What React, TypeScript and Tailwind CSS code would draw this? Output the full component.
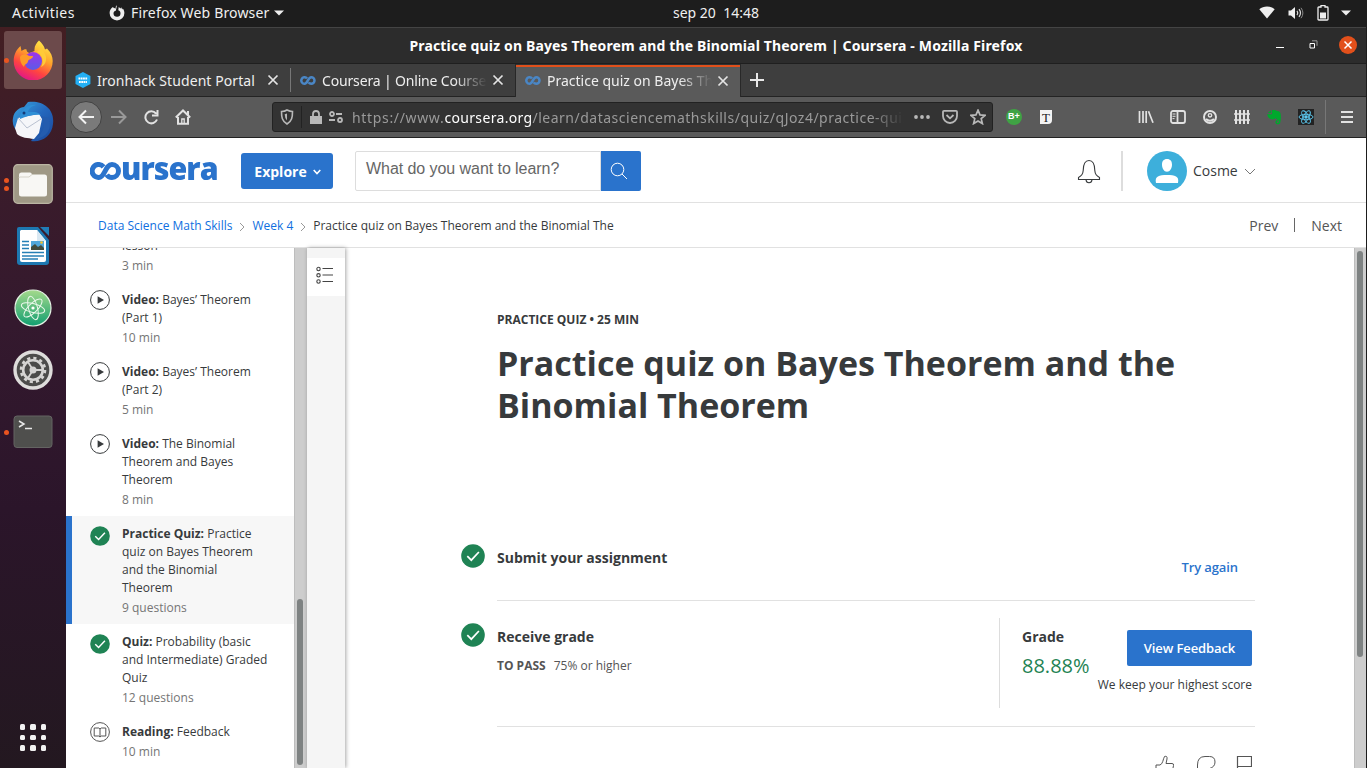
import type { ReactNode } from "react";

function InfinityMark({ className }: { className: string }) {
  return (
    <svg viewBox="0 0 31 18" className={className} fill="none" stroke="currentColor" strokeWidth="5">
      <path d="M13.600 4.800A6.500 6.500 0 1 0 8.900 15.500C14.800 15.500 15.300 2.500 22 2.500a6.500 6.500 0 0 1 0 13c-2.400 0-4.100-1-5.200-2.800" />
    </svg>
  );
}

function CheckBadge({ className }: { className: string }) {
  return (
    <svg viewBox="0 0 24 24" className={className}>
      <circle cx="12" cy="12" r="11.8" fill="#1f8354" />
      <path d="M6.3 12.2l4 4 7.6-8.2" fill="none" stroke="#fff" strokeWidth="1.7" />
    </svg>
  );
}

function PlayIcon() {
  return (
    <svg viewBox="0 0 20 20" className="size-5">
      <circle cx="10" cy="10" r="9.4" fill="#fff" stroke="#373a3c" strokeWidth="1" />
      <path d="M7.600 6.200L14 10l-6.400 3.800z" fill="#373a3c" />
    </svg>
  );
}

function BookIcon() {
  return (
    <svg viewBox="0 0 20 20" className="size-5" fill="none" stroke="#555" strokeWidth="1">
      <circle cx="10" cy="10" r="9.4" />
      <path d="M4.200 6h4.600L10 7l1.200-1h4.600v8h-4.600L10 15l-1.200-1H4.200zM10 7v8" />
    </svg>
  );
}

function Close() {
  return (
    <svg viewBox="0 0 12 12" className="size-3 shrink-0" stroke="#e4e4e4" strokeWidth="1.7">
      <path d="M1.500 1.500l9 9M10.500 1.500l-9 9" />
    </svg>
  );
}

function TopBar() {
  return (
    <div className="grid h-[27px] shrink-0 grid-cols-[673px_auto_1fr] items-center bg-[#1d1d1d] pb-0.5 font-['Noto_Sans',sans-serif] text-[14px] text-[#f0f0f0]">
      <div className="flex items-center pl-3">
        <span className="w-[97px] whitespace-nowrap tracking-[0.45px]">Activities</span>
        <svg viewBox="0 0 16 16" className="mr-1.5 size-4">
          <path d="M8 .3c-1.400 1-1.500 2.200-1.200 3.200-1.300 0-2.300-.3-2.800-1.400C2 3.200.6 5.400.6 8.100a7.400 7.400 0 1 0 14.800 0c0-2-.7-3.700-1.700-4.700l-.5 1-1-2.200-.7 1.200L9.700 2 9.300 5.300C11 6 11.600 7 11.500 8.500A3.400 3.400 0 0 1 8 11.700a3.500 3.500 0 0 1-3.500-3.300c0-1.400.8-2.400 2.300-2.700z" fill="#eee" />
        </svg>
        <span className="whitespace-nowrap tracking-[0.16px]">Firefox Web Browser</span>
        <svg viewBox="0 0 10 6" className="ml-[5px] h-1.5 w-2.5"><path d="M0 .5h10L5 5.500z" fill="#eee" /></svg>
      </div>
      <span className="whitespace-pre">sep 20  14:48</span>
      <div className="flex items-center justify-end pr-4">
        <svg viewBox="0 0 16 14" className="mr-[13px] h-3.5 w-4"><path d="M.3 3.200C4.500-.5 11.500-.5 15.700 3.200L8 12.500z" fill="#eee" /></svg>
        <svg viewBox="0 0 16 14" className="mr-[13px] h-3.5 w-4" fill="none" stroke="#ddd">
          <path d="M.5 4.500H3L7 1v12L3 9.500H.5z" fill="#eee" stroke="none" />
          <path d="M9 4.800q1.600 2.200 0 4.400M11 3.200q3 3.800 0 7.600" strokeWidth="1.200" /><path d="M13 1.800q3.800 5.200 0 10.400" stroke="#888" />
        </svg>
        <svg viewBox="0 0 12 16" className="mr-3 h-4 w-3"><path d="M4 .5h4V2h2.200q.8 0 .8.800v11.400q0 .8-.8.8H1.800q-.8 0-.8-.8V2.800Q1 2 1.800 2H4z" fill="none" stroke="#eee" strokeWidth="1.300" /><path d="M3 7.500h6v6H3z" fill="#eee" /></svg>
        <svg viewBox="0 0 10 6" className="h-1.5 w-2.5"><path d="M0 .5h10L5 5.500z" fill="#eee" /></svg>
      </div>
    </div>
  );
}

function DockItem({ children, dots = 0, active = false }: { children: ReactNode; dots?: number; active?: boolean }) {
  return (
    <div className="flex h-[62px] items-center">
      <div className="-mr-1 flex w-2 shrink-0 flex-col items-end gap-[3px]">
        {Array.from({ length: dots }, (_, i) => (
          <span key={i} className="z-10 size-[5px] translate-x-px rounded-full bg-[#e95420]" />
        ))}
      </div>
      <div className={`flex h-[58px] w-[58px] items-center justify-center rounded-[3px] ${active ? "bg-[#6c4a4b]" : ""}`}>{children}</div>
    </div>
  );
}

function Dock() {
  return (
    <nav className="flex w-[66px] shrink-0 flex-col bg-[linear-gradient(180deg,#431e22_0%,#3b1c2a_18%,#34192e_40%,#2b152a_65%,#231820_100%)] pt-0.5">
      <DockItem dots={1} active>
        <svg viewBox="0 0 40 40" className="-mt-px size-10">
          <defs>
            <linearGradient id="ff" x1=".8" y1="0" x2=".3" y2="1"><stop offset="0" stopColor="#fff04a" /><stop offset=".4" stopColor="#ffa42b" /><stop offset=".7" stopColor="#ff4540" /><stop offset="1" stopColor="#e0138c" /></linearGradient>
            <linearGradient id="ffp" x1="0" y1="0" x2="0" y2="1"><stop offset="0" stopColor="#a033e8" /><stop offset="1" stopColor="#5a5ce8" /></linearGradient>
          </defs>
          <path d="M26 .5c3 3 5 5 6 9l2-1c4 4 5.700 8 5.700 12.500A19.500 19.500 0 0 1 .7 21C.7 15 3 10.500 6 7.500l1.500-1.500 1 5c2-1.500 4-2 5-1.500 0 2 1 3 3 3.500l5-2c-.5-5 2-8 4.500-10.500z" fill="url(#ff)" />
          <circle cx="20" cy="21" r="9" fill="url(#ffp)" />
          <path d="M7 17c2-3 6-3 9-1h4c0 3-4 3-5 5 0 3-4 3-4 6-3-3-4-6-4-10z" fill="#ff9a28" />
          <path d="M24 12c6 3 7 10 4 15 5-2 7-9 3-15l-3-4z" fill="#ffcb38" />
        </svg>
      </DockItem>
      <DockItem>
        <svg viewBox="0 0 42 42" className="size-[42px]">
          <defs><linearGradient id="tb" x1="0" y1="0" x2="1" y2="1"><stop offset="0" stopColor="#39a5df" /><stop offset=".5" stopColor="#2467bd" /><stop offset="1" stopColor="#19479a" /></linearGradient></defs>
          <path d="M16 1c15-2 27 7 25 22-1 12-12 19-22 17l3-4C8 36-1 28 1 17 2 10 8 6 12 6z" fill="url(#tb)" />
          <path d="M6 17l21-4 3 5-3 14-5 6c-6-1-13-1-17-5l-2-6z" fill="#f5f6f9" />
          <path d="M6 17l9 10 14-9" fill="none" stroke="#b9c1d0" />
          <path d="M8 15C10 8 17 3 24 4c-4 1-7 3-8 7 5 0 9-1 13 3-6-1-13 0-21 4z" fill="#2f8fd6" />
          <circle cx="12" cy="12" r="1.500" fill="#153b78" />
          <path d="M29 15c5 8 3 16-5 23 11-2 16-10 13-21z" fill="#245cae" />
        </svg>
      </DockItem>
      <DockItem dots={2}>
        <svg viewBox="0 0 40 40" className="size-10">
          <rect x=".7" y=".7" width="38.600" height="38.600" rx="4" fill="#9f9885" stroke="#bbb5a3" strokeWidth="1.200" />
          <path d="M6 11q0-2.500 2.500-2.500H17q1.500 0 2 2h12.500Q34 10.500 34 13v17q0 2.500-2.500 2.500h-23Q6 32.500 6 30z" fill="#f8f7f4" />
          <path d="M6 14q0-1 1-1h9l3-2.500" stroke="#d6d3c9" fill="none" />
        </svg>
      </DockItem>
      <DockItem>
        <svg viewBox="0 0 34 40" className="h-10 w-[34px]">
          <path d="M3 1h19l11 13v22q0 3-3 3H4q-3 0-3-3V3q0-2 2-2z" fill="#1d78b1" />
          <path d="M5 4h16l9 11v19q0 2-2 2H6q-2 0-2-2V5z" fill="#fff" />
          <path d="M24 1h9v9z" fill="#207db7" /><path d="M21 4v11h9z" fill="#d9e8f2" />
          <path d="M6 15.500h7M6 19h7M6 22.500h7M6 26.500h22M6 30h22M6 33h16" stroke="#267fb5" strokeWidth="1.700" />
          <path d="M15 15h13v9H15z" fill="#51a7da" /><path d="M15 24v-3l4-3 3 3 3-2 3 3v2z" fill="#424b3d" /><circle cx="25.500" cy="16.500" r="1.300" fill="#f5c32c" />
        </svg>
      </DockItem>
      <DockItem>
        <svg viewBox="0 0 38 38" className="size-[38px]">
          <defs><linearGradient id="at" x1="0" y1="0" x2="0" y2="1"><stop offset="0" stopColor="#a5da8c" /><stop offset="1" stopColor="#119e70" /></linearGradient></defs>
          <circle cx="19" cy="19" r="18" fill="url(#at)" stroke="#e4f2e4" strokeWidth="1.200" />
          <g fill="none" stroke="#e9f7ea" strokeWidth="1">
            <ellipse cx="19" cy="19" rx="12" ry="4.500" transform="rotate(15 19 19)" />
            <ellipse cx="19" cy="19" rx="12" ry="4.500" transform="rotate(75 19 19)" />
            <ellipse cx="19" cy="19" rx="12" ry="4.500" transform="rotate(135 19 19)" />
          </g>
          <circle cx="19" cy="19" r="1.600" fill="#fff" />
        </svg>
      </DockItem>
      <DockItem>
        <svg viewBox="0 0 40 40" className="size-10" fill="none">
          <circle cx="20" cy="20" r="18" fill="#4c4c4a" stroke="#dedddb" strokeWidth="3.400" />
          <circle cx="20" cy="20" r="12" stroke="#d5d4d2" strokeWidth="2.600" strokeDasharray="3.140 3.140" />
          <circle cx="20" cy="20" r="9.800" stroke="#d5d4d2" strokeWidth="2.600" />
          <circle cx="20" cy="20" r="3.500" fill="#d5d4d2" />
          <path d="M20 20h9M20 20l-5-8M20 20l-5 8" stroke="#d5d4d2" strokeWidth="1.800" />
        </svg>
      </DockItem>
      <DockItem dots={1}>
        <svg viewBox="0 0 40 34" className="h-[34px] w-10">
          <rect x="1" y="1" width="38" height="31.500" rx="3" fill="#4f4f4d" stroke="#646462" />
          <path d="M6 6l5 3-5 3M12 13.500h7" stroke="#e8e8e8" strokeWidth="1.500" fill="none" />
        </svg>
      </DockItem>
      <div className="mx-auto mt-auto mb-[17px] grid grid-cols-3 gap-[5px]">
        {Array.from({ length: 9 }, (_, i) => (
          <span key={i} className="size-[5.600px] rounded-[1.500px] bg-[#f2f2f2]" />
        ))}
      </div>
    </nav>
  );
}

function TitleBar() {
  return (
    <div className="grid h-[37px] shrink-0 grid-cols-[1fr_auto_1fr] items-center border-t border-b border-t-[#444] border-b-[#1f1f1f] bg-[#2c2c2c]">
      <span />
      <span className="whitespace-nowrap font-['Noto_Sans',sans-serif] text-[14px] font-bold tracking-[0.15px] text-white">Practice quiz on Bayes Theorem and the Binomial Theorem | Coursera - Mozilla Firefox</span>
      <div className="flex items-center justify-end pr-[9px] pb-0.5">
        <svg viewBox="0 0 8 8" className="mr-[25px] size-2"><path d="M0 6.500h8" stroke="#fff" /></svg>
        <svg viewBox="0 0 9 9" className="mr-[21px] size-[9px]" fill="none"><path d="M1 3.500h4.500V8H1z" stroke="#fff" /><path d="M3 .8h5v5" stroke="#999" /></svg>
        <svg viewBox="0 0 18 18" className="size-[18px]"><circle cx="9" cy="9" r="9" fill="#e2501b" /><path d="M5.500 5.500l7 7M12.500 5.500l-7 7" stroke="#fff" strokeWidth="1.500" /></svg>
      </div>
    </div>
  );
}

function TabStrip() {
  const text = "w-[165px] overflow-hidden whitespace-nowrap mask-[linear-gradient(90deg,#000_80%,transparent_100%)]";
  return (
    <div className="flex h-[33px] shrink-0 border-b border-[#232323] bg-[#3e3e3e] font-['Noto_Sans',sans-serif] text-[14px] text-[#eee]">
      <div className="flex w-[225px] items-center pl-2">
        <svg viewBox="0 0 18 18" className="mr-1 size-[18px]"><path d="M9 1l7.500 4v8L9 17l-7.500-4V5z" fill="#23b0f5" /><path d="M4.500 7.500h9M5 11h8" stroke="#fff" strokeWidth="2.200" strokeDasharray="1.800 .5" /></svg>
        <span className="w-[172px] whitespace-nowrap pl-px tracking-[0.08px]">Ironhack Student Portal</span>
        <Close />
        <span className="ml-[11px] h-6 w-px bg-[#777]" />
      </div>
      <div className="flex w-[225px] items-center pl-[9px]">
        <InfinityMark className="mr-1.5 h-[9px] w-4 text-[#4a86c5]" />
        <span className={`${text} tracking-[-0.16px]`}>Coursera | Online Courses</span>
        <span className="ml-[5px]"><Close /></span>
      </div>
      <div className="-mb-px flex h-[33px] w-[224px] items-center bg-[#5a5a5a] pl-[9px] shadow-[inset_0_1px_0_#333,inset_0_3px_0_#e2501b,-1px_0_0_#282828,1px_0_0_#282828]">
        <InfinityMark className="mr-1.5 h-[9px] w-4 text-[#4a86c5]" />
        <span className={text}>Practice quiz on Bayes Theorem</span>
        <span className="ml-[5px]"><Close /></span>
      </div>
      <div className="flex items-center pl-[10px]">
        <svg viewBox="0 0 14 14" className="size-3.5" stroke="#e8e8e8" strokeWidth="2"><path d="M7 0v14M0 7h14" /></svg>
      </div>
    </div>
  );
}

function Tool({ children }: { children: ReactNode }) {
  return <span className="flex w-8 shrink-0 items-center justify-center">{children}</span>;
}

function NavBar() {
  return (
    <div className="flex h-[41px] shrink-0 items-center border-b border-[#222] bg-[#5a5a5a] pl-1 text-[#e2e2e2]">
      <span className="mr-px flex size-8 items-center justify-center rounded-full border border-[#424242] bg-[#7a7a7a]">
        <svg viewBox="0 0 16 16" className="size-4" fill="none" stroke="#f2f2f2" strokeWidth="2"><path d="M16 8H1.500M8 1.500L1.500 8 8 14.500" /></svg>
      </span>
      <Tool><svg viewBox="0 0 16 16" className="size-4" fill="none" stroke="#999" strokeWidth="2"><path d="M0 8h14.500M8 1.500L14.500 8 8 14.500" /></svg></Tool>
      <Tool><svg viewBox="0 0 16 16" className="size-4" fill="none" stroke="currentColor" strokeWidth="2"><path d="M13 4.500a6 6 0 1 0 1 6M9 6.500h5.500V1" /></svg></Tool>
      <Tool><svg viewBox="0 0 16 16" className="size-4" fill="none" stroke="currentColor" strokeWidth="2"><path d="M.8 8.500L8 1.500l7.200 7M3 8v6.800h10V8M13 6V2" /><path d="M6.800 14v-4h2.400v4" strokeWidth="1.300" /></svg></Tool>
      <div className="ml-[73px] flex h-[30px] w-[721px] items-center rounded-[3px] border border-[#222] bg-[#333] pl-[7px] text-[#b8b8b8]">
        <svg viewBox="0 0 14 16" className="h-4 w-3.5" fill="none" stroke="currentColor" strokeWidth="1.600"><path d="M7 1q3 1.500 5.500 1.500C12.500 8 12 12 7 15 2 12 1.500 8 1.500 2.500 4 2.500 5.500 2 7 1z" /><path d="M7 4.500v7Q4.800 9.500 4.700 5.300z" fill="currentColor" stroke="none" /></svg>
        <span className="mr-2 ml-[7px] h-[22px] w-px bg-[#222]" />
        <svg viewBox="0 0 12 14" className="mr-[7px] h-3.5 w-3"><path d="M0 6h12v8H0z" fill="currentColor" /><path d="M3 7V4q0-3 3-3t3 3v3" fill="none" stroke="currentColor" strokeWidth="1.800" /></svg>
        <svg viewBox="0 0 14 12" className="mr-[9px] h-3 w-3.5" fill="none" stroke="currentColor" strokeWidth="1.800"><circle cx="3" cy="3" r="2" /><path d="M7 3h6M0 9h6" /><circle cx="11" cy="9" r="2" /></svg>
        <div className="w-[552px] overflow-hidden whitespace-nowrap font-['Noto_Sans',sans-serif] text-[14px] tracking-[0.5px] text-[#9a9a9a] mask-[linear-gradient(90deg,#000_94%,transparent_100%)]">
          <span className="tracking-[0.66px]">https://www.</span><span className="tracking-[0.34px] text-white">coursera.org</span>/learn/datasciencemathskills/quiz/qJoz4/practice-quiz
        </div>
        <svg viewBox="0 0 16 4" className="ml-2.5 h-1 w-4" fill="currentColor"><circle cx="2" cy="2" r="1.900" /><circle cx="8" cy="2" r="1.900" /><circle cx="14" cy="2" r="1.900" /></svg>
        <svg viewBox="0 0 16 16" className="ml-3 size-4" fill="none" stroke="currentColor" strokeWidth="1.800"><path d="M2 1.800h12q1 0 1 1V7A7 7 0 0 1 1 7V2.800q0-1 1-1zM4.500 6L8 9.300 11.500 6" /></svg>
        <svg viewBox="0 0 16 16" className="ml-3 size-4" fill="none" stroke="currentColor" strokeWidth="1.700"><path d="M8 1.200l2 4.700 5.100.4-3.900 3.300 1.200 5L8 12l-4.400 2.600 1.200-5L.9 6.300 6 5.900z" /></svg>
      </div>
      <div className="ml-[5px] flex">
        <Tool><span className="flex size-4 items-center justify-center rounded-full bg-[#3fa344] font-['Liberation_Sans',sans-serif] text-[9px] font-bold text-white">B+</span></Tool>
        <Tool><span className="flex h-3.5 w-3 items-center justify-center rounded-br-[4px] bg-[#f3f3f3] font-['Liberation_Serif',serif] text-[13px] leading-none text-[#222]">T</span></Tool>
      </div>
      <div className="ml-[68px] flex">
        <Tool><svg viewBox="0 0 16 14" className="h-3.5 w-4" fill="none" stroke="currentColor" strokeWidth="1.700"><path d="M1.500 1v12M5 1v12M8.200 1v12M10.500 1.300L15 12.800" /></svg></Tool>
        <Tool><svg viewBox="0 0 16 14" className="h-3.5 w-4" fill="none" stroke="currentColor" strokeWidth="1.800"><rect x="1" y="1" width="14" height="12" rx="2" /><path d="M7.500 1v12" /><path d="M2.500 4h3M2.500 6.300h3M2.500 8.600h2" strokeWidth="1" /></svg></Tool>
        <Tool><svg viewBox="0 0 14 14" className="size-3.5" fill="none" stroke="currentColor" strokeWidth="2"><circle cx="7" cy="7" r="6" /><circle cx="7" cy="5.300" r="1.700" strokeWidth="1.400" /><path d="M3 9q4 3.500 8 0" /></svg></Tool>
        <Tool><svg viewBox="0 0 16 14" className="h-3.5 w-4" fill="none" stroke="currentColor"><path d="M2 0v14M6 0v14M10 0v14M14 0v14" strokeWidth="2" /><path d="M0 4h16M0 10h16" strokeWidth="1.400" /></svg></Tool>
        <Tool><svg viewBox="0 0 14 16" className="h-4 w-3.5"><path d="M4 1.200V4H.8L4 1.200zM4.800 1h3.500l1 .8c2.500 0 3.800 1 4.200 2.500.7 3.500.4 6.500-.3 9.500-.5 1.800-4 2.200-4.700 0-.5-2 .8-3 2.300-2.500v1.200c-1-.2-1.200.5-.8 1.200 1 .5 1.800 0 1.800-1.200 0-2-2.800-1.500-3.300-3.500C7.500 11.500.8 11 .2 5.300h4.600z" fill="#00a82d" /></svg></Tool>
        <Tool><svg viewBox="0 0 16 16" className="size-4" fill="none" stroke="#5cc9f0" strokeWidth=".9"><path d="M0 0h16v16H0z" fill="#222" stroke="none" /><ellipse cx="8" cy="8" rx="7" ry="2.700" /><ellipse cx="8" cy="8" rx="7" ry="2.700" transform="rotate(60 8 8)" /><ellipse cx="8" cy="8" rx="7" ry="2.700" transform="rotate(120 8 8)" /><circle cx="8" cy="8" r="1.300" fill="#5cc9f0" /></svg></Tool>
      </div>
      <span className="ml-[3px] h-[34px] w-px bg-[#777]" />
      <svg viewBox="0 0 12 12" className="ml-[15px] size-3" stroke="currentColor" strokeWidth="2"><path d="M0 1h12M0 6h12M0 11h12" /></svg>
    </div>
  );
}

function Header() {
  return (
    <header className="flex h-[65px] shrink-0 items-center border-b border-[#e1e1e1] pt-0.5 pl-6">
      <div className="flex w-[151px] items-center text-[#2a73cc]">
        <InfinityMark className="h-[18px] w-[31px] shrink-0" />
        <span className="-mt-[7px] origin-left scale-x-[0.95] font-['Open_Sans',sans-serif] text-[32px] leading-[33px] font-extrabold tracking-[-1px]">ursera</span>
      </div>
      <button className="flex h-9 w-[92px] shrink-0 items-center justify-center gap-1.5 rounded-[3px] bg-[#2a73cc] pl-px text-[14px] font-bold text-white">
        Explore
        <svg viewBox="0 0 8 6" className="mt-0.5 h-1.5 w-2" fill="none" stroke="#fff" strokeWidth="1.600"><path d="M.7 1L4 4.500 7.300 1" /></svg>
      </button>
      <div className="ml-[22px] flex h-10 w-[286px] shrink-0">
        <div className="w-[246px] rounded-l-[2px] border border-[#ddd] pt-2 pl-2.5 font-['Liberation_Sans',sans-serif] text-[16px] leading-[18px] tracking-[-0.06px] text-[#666]">What do you want to learn?</div>
        <div className="flex w-10 items-center justify-center rounded-r-[2px] bg-[#2a73cc]">
          <svg viewBox="0 0 18 18" className="size-[18px] -ml-1" fill="none" stroke="#fff" strokeWidth="1"><circle cx="7.500" cy="7.500" r="6.300" /><path d="M12 12l5 5" /></svg>
        </div>
      </div>
      <svg viewBox="0 0 24 26" className="mt-0.5 ml-[436px] h-[26px] w-6 shrink-0" fill="none" stroke="#373a3c" strokeWidth="1.100"><path d="M1.500 20.500v-2c3-1.500 4.500-4 4.700-7C6.300 5 7.500 1.500 12 1.500s5.700 3.500 5.800 10c.2 3 1.700 5.500 4.700 7v2zM9 20.800c.3 4 5.700 4 6 0" /></svg>
      <span className="ml-5 h-10 w-0.5 shrink-0 bg-[#ddd]" />
      <svg viewBox="0 0 40 40" className="ml-6 size-10 shrink-0"><circle cx="20" cy="20" r="20" fill="#3dafdb" /><path d="M20 8c3.400 0 5 2.200 5 5.600 0 4-2 7.200-5 7.200s-5-3.200-5-7.200C15 10.200 16.600 8 20 8zM9 32c-1.500-7 3-8 11-8s12.500 1 11 8z" fill="#fff" /></svg>
      <span className="-mt-px ml-1.5 w-[51px] text-[14px] text-[#373a3c]">Cosme</span>
      <svg viewBox="0 0 12 7" className="mt-px h-[7px] w-3" fill="none" stroke="#777"><path d="M1 1l5 5 5-5" /></svg>
    </header>
  );
}

function Crumb() {
  return <svg viewBox="0 0 6 10" className="mx-[7px] mt-0.5 h-2.5 w-1.5" fill="none" stroke="#999"><path d="M1 1l4 4-4 4" /></svg>;
}

function Breadcrumbs() {
  return (
    <div className="flex h-[45px] shrink-0 items-center border-b border-[#e1e1e1] pt-px pr-6 pl-8 text-[12px] whitespace-nowrap text-[#373a3c]">
      <span className="text-[#0f6fe0]">Data Science Math Skills</span>
      <Crumb />
      <span className="text-[#0f6fe0]">Week 4</span>
      <Crumb />
      <span>Practice quiz on Bayes Theorem and the Binomial The</span>
      <div className="-mt-px ml-auto flex items-center text-[14px] text-[#555]">
        Prev<span className="mx-4 h-3.5 w-px bg-[#666]" />Next
      </div>
    </div>
  );
}

type Lesson = { kind: string; lines: string[]; meta: string; icon: "play" | "check" | "book"; active?: boolean };

const lessons: Lesson[] = [
  { kind: "Video:", lines: ["Bayes’ Theorem", "(Part 1)"], meta: "10 min", icon: "play" },
  { kind: "Video:", lines: ["Bayes’ Theorem", "(Part 2)"], meta: "5 min", icon: "play" },
  { kind: "Video:", lines: ["The Binomial", "Theorem and Bayes", "Theorem"], meta: "8 min", icon: "play" },
  { kind: "Practice Quiz:", lines: ["Practice", "quiz on Bayes Theorem", "and the Binomial", "Theorem"], meta: "9 questions", icon: "check", active: true },
  { kind: "Quiz:", lines: ["Probability (basic", "and Intermediate) Graded", "Quiz"], meta: "12 questions", icon: "check" },
  { kind: "Reading:", lines: ["Feedback"], meta: "10 min", icon: "book" },
];

function Sidebar() {
  return (
    <aside className="flex w-[228px] shrink-0 flex-col overflow-hidden text-[12px] leading-[18px] text-[#373a3c]">
      <div className="flex h-[34px] shrink-0 flex-col justify-end overflow-hidden pb-[7px] pl-14">
        <div>lesson</div>
        <div className="mt-0.5 text-[#757575]">3 min</div>
      </div>
      {lessons.map((l, i) => (
        <div key={i} className={`flex shrink-0 border-l-[6px] pt-[9px] pb-[7px] pl-[18px] ${l.active ? "border-[#2a73cc] bg-[#f7f7f7]" : "border-transparent"}`}>
          <span className={`mr-3 shrink-0 ${l.icon === "check" ? "mt-px" : "-mt-px"}`}>
            {l.icon === "play" ? <PlayIcon /> : l.icon === "check" ? <CheckBadge className="size-5" /> : <BookIcon />}
          </span>
          <div className="whitespace-nowrap">
            {l.lines.map((line, j) => (
              <div key={j}>{j === 0 && <b>{l.kind} </b>}{line}</div>
            ))}
            <div className="mt-0.5 text-[#757575]">{l.meta}</div>
          </div>
        </div>
      ))}
    </aside>
  );
}

function Quiz() {
  return (
    <main className="flex min-w-0 flex-1 flex-col overflow-hidden pt-[63px] pl-[116px] text-[#373a3c]">
      <div className="flex h-[215px] shrink-0 flex-col pl-9">
        <div className="text-[12px] leading-[18px] font-bold">PRACTICE QUIZ • 25 MIN</div>
        <h1 className="mt-[13px] whitespace-nowrap text-[34px] leading-[42px] font-bold">Practice quiz on Bayes Theorem and the<br />Binomial Theorem</h1>
      </div>
      <section className="flex h-[75px] w-[794px] shrink-0">
        <CheckBadge className="mt-[18px] mr-3 size-6" />
        <div className="flex flex-1 justify-between border-b border-[#e1e1e1]">
          <h2 className="mt-[21px] text-[14px] leading-[22px] font-bold">Submit your assignment</h2>
          <span className="mt-[31px] mr-[17px] text-[13px] leading-5 font-semibold tracking-[-0.1px] text-[#2a73cc]">Try again</span>
        </div>
      </section>
      <section className="flex h-[126px] w-[794px] shrink-0">
        <CheckBadge className="mt-[22px] mr-3 size-6" />
        <div className="flex flex-1 border-b border-[#e1e1e1] pt-[17px] pb-[18px]">
          <div className="w-[502px]">
            <h2 className="mt-2 text-[14px] leading-[22px] font-bold">Receive grade</h2>
            <p className="mt-[9px] text-[12px] leading-[18px] text-[#555]"><b className="mr-2">TO PASS</b>75% or higher</p>
          </div>
          <div className="w-[98px] shrink-0 border-l border-[#ddd] pl-[22px]">
            <h2 className="mt-2 text-[14px] leading-[22px] font-bold">Grade</h2>
            <p className="mt-1.5 text-[20px] leading-6 text-[#1f8354]">88.88%</p>
          </div>
          <div className="flex w-[155px] shrink-0 flex-col items-end">
            <button className="mt-3 h-9 w-[125px] rounded-[2px] bg-[#2a73cc] pt-0.5 text-[13px] font-semibold tracking-[-0.1px] text-white">View Feedback</button>
            <p className="mt-2.5 text-[12px] leading-[18px] whitespace-nowrap">We keep your highest score</p>
          </div>
        </div>
      </section>
      <div className="flex w-[794px] shrink-0 justify-end pt-7 pr-[3px]">
        <svg viewBox="0 0 20 20" className="mr-[21px] size-5" fill="none" stroke="#555"><path d="M1 10h4c3-1 3-6 4.500-8.500Q12.500.5 12 4l-1 4.500h6q2 0 1.500 2L17 18H6l-1-1H1z" /></svg>
        <svg viewBox="0 0 20 20" className="mr-5 size-5" fill="none" stroke="#555"><path d="M1.500 16V10Q1.500 1.500 9 1.500h4.500q5.500 0 5.500 5.500 0 5-5.500 6.500L12 18H3.500q-2 0-2-2z" /></svg>
        <svg viewBox="0 0 16 20" className="h-5 w-4" fill="none" stroke="#555" strokeWidth="1.200"><path d="M1.500 20V1.500h14v10h-14" /></svg>
      </div>
    </main>
  );
}

export default function App() {
  return (
    <div className="flex h-[768px] w-[1367px] flex-col overflow-hidden bg-[#1d1d1d]">
      <TopBar />
      <div className="flex min-h-0 flex-1">
        <Dock />
        <div className="flex w-[1300px] shrink-0 flex-col">
          <TitleBar />
          <TabStrip />
          <NavBar />
          <div className="flex min-h-0 flex-1 flex-col bg-white font-['Open_Sans',sans-serif]">
            <Header />
            <Breadcrumbs />
            <div className="flex min-h-0 flex-1">
              <Sidebar />
              <div className="flex w-[13px] shrink-0 border-l border-[#bdbdbd] bg-[#cdcdcd] pl-0.5"><span className="mt-[351px] h-[166px] w-1.5 rounded-full bg-[#7e8282]" /></div>
              <div className="z-10 w-[38px] shrink-0 bg-[#f5f5f5] pt-2.5 shadow-[1px_0_4px_rgba(0,0,0,0.35)]">
                <div className="flex h-[38px] items-center justify-center bg-white pb-1">
                  <svg viewBox="0 0 18 18" className="size-[18px] -ml-[3px]" fill="none" stroke="#444" strokeWidth="1.100"><circle cx="2.500" cy="3" r="1.700" /><circle cx="2.500" cy="9.300" r="1.700" /><circle cx="2.500" cy="15.500" r="1.700" /><path d="M6.500 2.500H17M6.500 9H17M6.500 15.500H17" /></svg>
                </div>
              </div>
              <Quiz />
              <div className="flex w-3 shrink-0 border-l border-[#bdbdbd] bg-[#cdcdcd] pl-0.5"><span className="mt-[3px] h-[406px] w-1.5 rounded-full bg-[#7e8282]" /></div>
            </div>
          </div>
        </div>
      </div>
    </div>
  );
}
